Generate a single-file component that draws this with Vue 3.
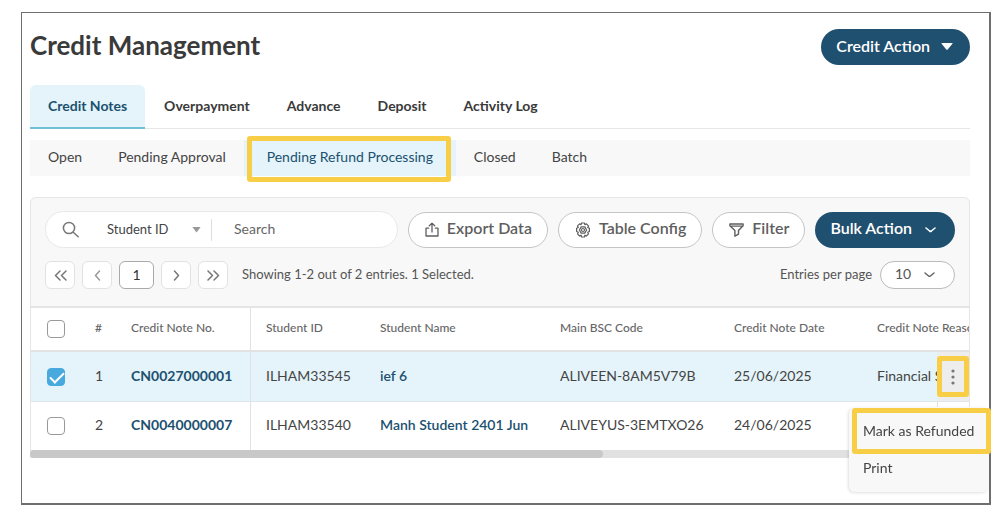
<script setup>
import { ref } from 'vue'

const tabs = ['Credit Notes', 'Overpayment', 'Advance', 'Deposit', 'Activity Log']
const activeTab = ref('Credit Notes')

const subTabs = ['Open', 'Pending Approval', 'Pending Refund Processing', 'Closed', 'Batch']
const activeSubTab = ref('Pending Refund Processing')

const searchBy = ref('Student ID')
const keyword = ref('')
const pageSize = ref('10')
const menuOpen = ref(true)

const rows = ref([
  { no: 1, note: 'CN0027000001', studentId: 'ILHAM33545', name: 'ief 6', code: 'ALIVEEN-8AM5V79B', date: '25/06/2025', reason: 'Financial Support', selected: true },
  { no: 2, note: 'CN0040000007', studentId: 'ILHAM33540', name: 'Manh Student 2401 Jun', code: 'ALIVEYUS-3EMTXO26', date: '24/06/2025', reason: '', selected: false },
])
</script>

<template>
  <main class="frame">
    <header class="head">
      <h1>Credit Management</h1>
      <button class="btn primary credit-action">
        Credit Action
        <svg width="12" height="7" viewBox="0 0 12 7"><path d="M1 0h10q1 0 .4.8L6.700 6.400q-.7.7-1.400 0L.6.8Q0 0 1 0z" fill="currentColor" /></svg>
      </button>
    </header>

    <nav class="tabs">
      <button v-for="t in tabs" :key="t" :class="{ active: t === activeTab }" @click="activeTab = t">{{ t }}</button>
    </nav>

    <nav class="subtabs">
      <button v-for="t in subTabs" :key="t" :class="{ active: t === activeSubTab }" @click="activeSubTab = t">{{ t }}</button>
    </nav>

    <section class="card">
      <div class="toolbar">
        <div class="row">
          <div class="search">
            <svg class="glass" width="18" height="18" viewBox="0 0 18 18" fill="none" stroke="#777" stroke-width="1.5" stroke-linecap="round"><circle cx="7" cy="7" r="5.600" /><path d="M11.200 11.200l5 4.600" /></svg>
            <div class="field">
              <select v-model="searchBy" aria-label="Search by"><option>Student ID</option></select>
              <svg width="9" height="6" viewBox="0 0 9 6"><path d="M.4 0h8.200L4.500 5.600z" fill="#999" /></svg>
            </div>
            <input v-model="keyword" type="text" placeholder="Search" aria-label="Search" />
          </div>
          <button class="btn outline">
            <svg width="14" height="15" viewBox="0 0 14 15" fill="none" stroke="currentColor" stroke-width="1.300" stroke-linecap="round" stroke-linejoin="round"><path d="M3.600 6.200H1v7.800h12V6.200h-2.600M7 10V1.200M4.300 3.800L7 1.100l2.700 2.700" /></svg>
            Export Data
          </button>
          <button class="btn outline">
            <svg width="16" height="16" viewBox="0 0 16 16" fill="none" stroke="currentColor" stroke-width="1.200" stroke-linejoin="round"><path d="M6.600 1h2.800l.5 1.600 1.500-.7 2.100 2-.8 1.600 1.700.8v3.200l-1.700.8.8 1.600-2.100 2.100-1.500-.8L9.400 15H6.600l-.5-1.800-1.500.8-2.100-2.100.8-1.600L1.600 9.500V6.300l1.700-.8-.8-1.600 2.100-2 1.500.7z" /><path d="M6.200 4.900h3.600L11.600 8l-1.800 3.100H6.200L4.400 8z" /><circle cx="8" cy="8" r="1.500" /></svg>
            Table Config
          </button>
          <button class="btn outline">
            <svg width="15" height="14" viewBox="0 0 15 14" fill="none" stroke="currentColor" stroke-width="1.400" stroke-linejoin="round"><path d="M.9 1h13.200v1.700L9.500 7.600v3.600l-3.600 2V7.600L.9 2.700zM2 3.100h11" /></svg>
            Filter
          </button>
          <button class="btn primary bulk">
            Bulk Action
            <svg width="11" height="6" viewBox="0 0 11 6" fill="none" stroke="currentColor" stroke-width="1.600" stroke-linecap="round" stroke-linejoin="round"><path d="M1 1l3.600 3q.9.7 1.800 0L10 1" /></svg>
          </button>
        </div>

        <div class="row second">
          <div class="pager">
            <button aria-label="First page"><svg width="13" height="11" viewBox="0 0 13 11"><path d="M6 1L1.500 5.500 6 10M12 1L7.500 5.500 12 10" /></svg></button>
            <button aria-label="Previous page" class="off"><svg width="7" height="11" viewBox="0 0 7 11"><path d="M5.500 1L1.500 5.500l4 4.500" /></svg></button>
            <button class="current">1</button>
            <button aria-label="Next page"><svg width="7" height="11" viewBox="0 0 7 11"><path d="M1.500 1l4 4.500-4 4.500" /></svg></button>
            <button aria-label="Last page"><svg width="13" height="11" viewBox="0 0 13 11"><path d="M1 1l4.500 4.500L1 10M7 1l4.500 4.500L7 10" /></svg></button>
          </div>
          <span class="count">Showing 1-2 out of 2 entries. 1 Selected.</span>
          <label for="page-size" class="per-page">Entries per page</label>
          <div class="size">
            <select id="page-size" v-model="pageSize"><option>10</option></select>
            <svg width="11" height="6" viewBox="0 0 11 6" fill="none" stroke="#666" stroke-width="1.500" stroke-linecap="round" stroke-linejoin="round"><path d="M1 1l3.600 3q.9.7 1.800 0L10 1" /></svg>
          </div>
        </div>
      </div>

      <div class="scroller">
        <table>
          <colgroup>
            <col class="c-check" /><col class="c-no" /><col class="c-note" /><col class="c-sid" /><col class="c-name" /><col class="c-code" /><col class="c-date" /><col /><col class="c-act" />
          </colgroup>
          <thead>
            <tr>
              <th class="check"><input type="checkbox" aria-label="Select all" /></th>
              <th>#</th>
              <th class="edge">Credit Note No.</th>
              <th>Student ID</th>
              <th>Student Name</th>
              <th>Main BSC Code</th>
              <th>Credit Note Date</th>
              <th>Credit Note Reason</th>
              <th></th>
            </tr>
          </thead>
          <tbody>
            <tr v-for="r in rows" :key="r.no" :class="{ picked: r.selected }">
              <td class="check"><input v-model="r.selected" type="checkbox" :aria-label="'Select ' + r.note" /></td>
              <td>{{ r.no }}</td>
              <td class="edge"><a href="#" class="note">{{ r.note }}</a></td>
              <td>{{ r.studentId }}</td>
              <td><a href="#" class="name">{{ r.name }}</a></td>
              <td>{{ r.code }}</td>
              <td>{{ r.date }}</td>
              <td>{{ r.reason }}</td>
              <td class="act">
                <button v-if="r.selected" class="dots marked" aria-label="Row actions" @click="menuOpen = !menuOpen">
                  <svg width="4" height="16" viewBox="0 0 4 16" fill="#777"><circle cx="2" cy="2" r="1.600" /><circle cx="2" cy="8" r="1.600" /><circle cx="2" cy="14" r="1.600" /></svg>
                </button>
              </td>
            </tr>
          </tbody>
        </table>
      </div>
      <div class="track"><div class="thumb"></div></div>

      <div v-if="menuOpen" class="menu">
        <button class="marked">Mark as Refunded</button>
        <button>Print</button>
      </div>
    </section>
  </main>
</template>

<style>
body {
  background: #fff;
}
</style>

<style scoped>
* {
  box-sizing: border-box;
}
.frame {
  margin: 12px 7px 0 21px;
  padding: 16px 19px 45px 8px;
  border: 2px solid #6e6e6e;
  border-top-width: 1px;
  border-left-width: 1px;
  font-family: Lato, "Open Sans", sans-serif;
  font-size: 14px;
  line-height: 20px;
  color: #444;
}
button,
input,
select {
  font: inherit;
  color: inherit;
  margin: 0;
}
button {
  display: flex;
  align-items: center;
  justify-content: center;
  padding: 0;
  border: 0;
  background: none;
  white-space: nowrap;
  cursor: pointer;
}
.head {
  display: flex;
  justify-content: space-between;
  align-items: center;
}
h1 {
  margin: 0;
  padding-bottom: 4px;
  font-size: 26px;
  line-height: 32px;
  font-weight: 700;
  color: #3a3a3a;
}
.btn {
  height: 36px;
  border-radius: 18px;
  font-size: 16px;
  font-weight: 600;
}
.primary {
  background: #20506f;
  color: #fff;
}
.credit-action {
  gap: 11px;
  padding: 0 17px 2px 15px;
}
.tabs {
  display: flex;
  gap: 1px;
  margin-top: 20px;
  box-shadow: inset 0 -1px #e6e6e6;
}
.tabs button {
  height: 44px;
  padding: 0 18px;
  font-weight: 700;
  color: #3a3a3a;
  border-bottom: 2px solid transparent;
}
.tabs .active {
  background: #e4f4fa;
  color: #20506f;
  border-bottom-color: #6fbfd6;
  border-radius: 6px 6px 0 0;
}
.subtabs {
  display: flex;
  margin-top: 11px;
  background: #f8f8f8;
}
.subtabs button {
  position: relative;
  height: 36px;
  padding: 0 18px 2px;
}
.subtabs .active {
  min-width: 212px;
  background: #e4f4fa;
  color: #20506f;
}
.subtabs .active::after {
  content: "";
  position: absolute;
  inset: -4px 5px -6px 3px;
  border: 5px solid #f7ce46;
  border-radius: 3px;
}
.card {
  position: relative;
  margin-top: 21px;
}
.toolbar {
  padding: 13px 14px 17px;
  background: #f8f8f8;
  border: 1px solid #e5e5e5;
  border-bottom-width: 2px;
  border-radius: 6px 6px 0 0;
}
.row {
  display: flex;
  align-items: center;
  gap: 10px;
}
.search {
  flex: 1;
  min-width: 0;
  display: flex;
  align-items: center;
  height: 37px;
  padding: 0 18px 0 16px;
  background: #fff;
  border: 1px solid #e8e8e8;
  border-radius: 19px;
}
.glass {
  flex: none;
}
.field {
  display: flex;
  align-items: center;
  flex: none;
  margin-left: 27px;
  padding-right: 10px;
  border-right: 1px solid #ddd;
}
select {
  appearance: none;
  border: 0;
  padding: 0;
  background: none;
  outline: 0;
}
.field select {
  width: 85px;
  height: 22px;
  padding-bottom: 2px;
  font-size: 13px;
}
.search input {
  flex: 1;
  min-width: 0;
  padding: 0 0 2px 22px;
  border: 0;
  outline: 0;
  background: none;
}
.search input::placeholder {
  color: #666;
  opacity: 1;
}
.outline {
  gap: 8px;
  padding: 0 15px 3px 16px;
  border: 1px solid #c4c4c4;
  background: #fff;
  color: #5f5f5f;
}
.outline svg {
  margin-top: 3px;
}
.bulk {
  gap: 13px;
  padding: 0 19px 3px 15px;
}
.bulk svg {
  margin-top: 3px;
}
.second {
  margin-top: 13px;
}
.pager {
  display: flex;
  gap: 7px;
}
.pager button {
  width: 30px;
  height: 28px;
  border: 1px solid #e2e2e2;
  border-radius: 6px;
  background: #fff;
}
.pager svg {
  fill: none;
  stroke: #777;
  stroke-width: 1.5;
  stroke-linecap: round;
  stroke-linejoin: round;
}
.pager .off svg {
  stroke: #999;
}
.pager .current {
  width: 35px;
  border-color: #aaa;
  color: #333;
}
.count,
.per-page {
  padding-bottom: 2px;
  font-size: 13px;
  color: #555;
  white-space: nowrap;
}
.count {
  margin-left: 4px;
}
.per-page {
  margin-left: auto;
}
.size {
  display: flex;
  align-items: center;
  height: 28px;
  margin-left: -2px;
  padding: 0 19px 0 14px;
  border: 1px solid #bbb;
  border-radius: 14px;
  background: #fff;
}
.size select {
  width: 29px;
  padding-bottom: 2px;
  color: #555;
}
.scroller {
  overflow: hidden;
  border: solid #e5e5e5;
  border-width: 0 1px;
}
table {
  width: 100%;
  min-width: 1033px;
  table-layout: fixed;
  border-collapse: separate;
  border-spacing: 0;
}
.c-check { width: 49px; }
.c-no { width: 36px; }
.c-note { width: 135px; }
.c-sid { width: 114px; }
.c-name { width: 180px; }
.c-code { width: 174px; }
.c-date { width: 143px; }
.c-act { width: 32px; }
th,
td {
  padding: 0 0 2px 15px;
  text-align: left;
  white-space: nowrap;
}
th {
  height: 44px;
  font-size: 12px;
  font-weight: 500;
  color: #666;
  border-bottom: 2px solid #e2e2e2;
}
td {
  height: 48px;
}
th.check,
td.check {
  padding: 0 0 0 16px;
}
.picked td {
  height: 50px;
  background: #e4f4fa;
  border-bottom: 1px solid #dfe6e9;
}
.edge {
  border-right: 1px solid #e2e2e2;
}
input[type="checkbox"] {
  appearance: none;
  display: block;
  position: relative;
  width: 18px;
  height: 18px;
  border: 1px solid #999;
  border-radius: 4px;
  background: #fff;
}
input[type="checkbox"]:checked {
  border-color: #48a9de;
  background: #48a9de;
}
input[type="checkbox"]:checked::after {
  content: "";
  position: absolute;
  left: 2px;
  top: 3px;
  width: 12px;
  height: 6px;
  border: solid #fff;
  border-width: 0 0 2px 2px;
  transform: rotate(-45deg);
}
a {
  color: #20506f;
  text-decoration: none;
}
.note {
  font-weight: 700;
}
.name {
  font-weight: 600;
}
td.act {
  position: sticky;
  right: 0;
  padding: 0;
  background: #fff;
  border-left: 1px solid #e2e2e2;
}
.picked td.act {
  background: #ededed;
  border-left: 0;
}
.dots {
  width: 32px;
  height: 41px;
}
.marked {
  border: 5px solid #f7ce46;
  border-radius: 3px;
}
.track {
  height: 8px;
  background: #e1e1e1;
}
.thumb {
  width: 61%;
  height: 8px;
  border-radius: 4px;
  background: #c8c8c8;
}
.menu {
  position: absolute;
  top: 210px;
  right: -19px;
  z-index: 2;
  width: 140px;
  padding: 1px 0 11px;
  background: #f8f8f8;
  border-radius: 6px;
  box-shadow: -1px 1px 3px rgba(0, 0, 0, 0.12);
}
.menu button {
  justify-content: flex-start;
  width: 139px;
  height: 27px;
  padding-left: 14px;
}
.menu .marked {
  width: 139px;
  height: 46px;
  margin-left: 3px;
  padding-left: 6px;
}
</style>
